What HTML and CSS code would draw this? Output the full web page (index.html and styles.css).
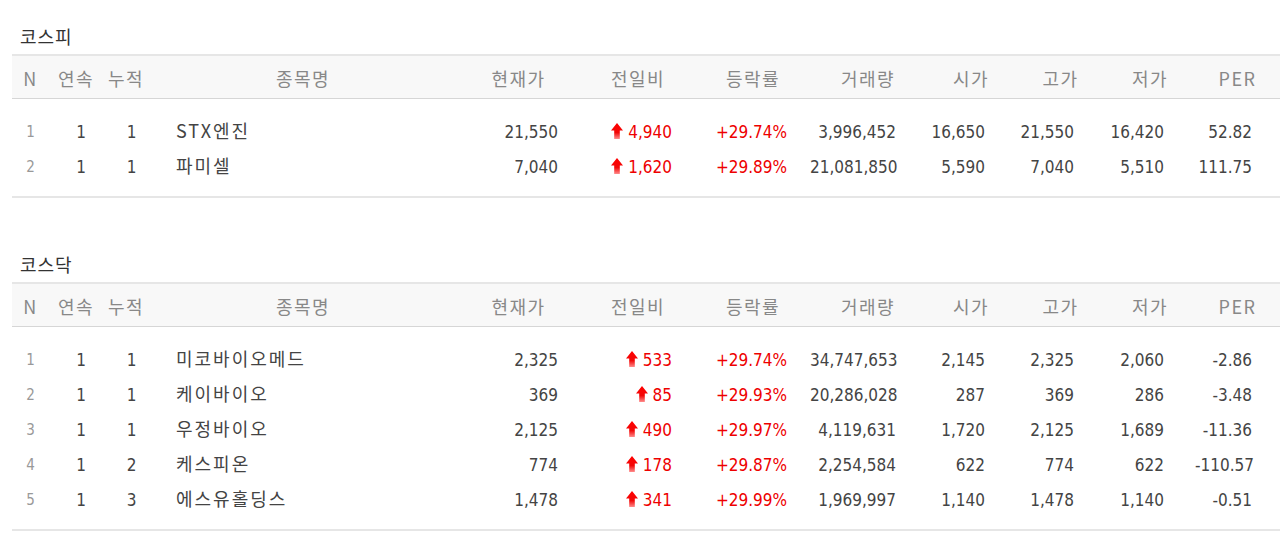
FILE: index.html
```html
<!DOCTYPE html>
<html lang="ko">
<head>
<meta charset="utf-8">
<title>상한가</title>
<link rel="stylesheet" href="styles.css">
</head>
<body>
<svg width="0" height="0" class="defs" aria-hidden="true">
  <defs>
    <linearGradient id="upg" x1="0" y1="0" x2="0" y2="1">
      <stop offset="0" stop-color="#ff0000"/>
      <stop offset="0.6" stop-color="#f20808"/>
      <stop offset="1" stop-color="#ff8c8c"/>
    </linearGradient>
  </defs>
</svg>

<section class="market">
  <h2 class="title">코스피</h2>
  <div class="grid head">
    <div class="h">N</div><div class="h">연속</div><div class="h">누적</div><div class="h">종목명</div>
    <div class="h">현재가</div><div class="h">전일비</div><div class="h">등락률</div><div class="h">거래량</div>
    <div class="h">시가</div><div class="h">고가</div><div class="h">저가</div><div class="h">PER</div>
  </div>
  <div class="body">
    <div class="grid row">
      <div class="no">1</div><div class="cnt c1">1</div><div class="cnt c2">1</div><div class="name">STX엔진</div>
      <div class="num p-price">21,550</div>
      <div class="num p-diff up"><svg class="arr" viewBox="0 0 12 16"><path d="M6 0 L12 7.5 L8.8 7.5 L8.8 16 L3.2 16 L3.2 7.5 L0 7.5 Z" fill="url(#upg)"/></svg>4,940</div>
      <div class="num p-rate up">+29.74%</div>
      <div class="num p-vol">3,996,452</div>
      <div class="num p-o">16,650</div><div class="num p-o">21,550</div><div class="num p-o">16,420</div>
      <div class="num p-per">52.82</div>
    </div>
    <div class="grid row">
      <div class="no">2</div><div class="cnt c1">1</div><div class="cnt c2">1</div><div class="name">파미셀</div>
      <div class="num p-price">7,040</div>
      <div class="num p-diff up"><svg class="arr" viewBox="0 0 12 16"><path d="M6 0 L12 7.5 L8.8 7.5 L8.8 16 L3.2 16 L3.2 7.5 L0 7.5 Z" fill="url(#upg)"/></svg>1,620</div>
      <div class="num p-rate up">+29.89%</div>
      <div class="num p-vol">21,081,850</div>
      <div class="num p-o">5,590</div><div class="num p-o">7,040</div><div class="num p-o">5,510</div>
      <div class="num p-per">111.75</div>
    </div>
  </div>
</section>

<section class="market second">
  <h2 class="title">코스닥</h2>
  <div class="grid head">
    <div class="h">N</div><div class="h">연속</div><div class="h">누적</div><div class="h">종목명</div>
    <div class="h">현재가</div><div class="h">전일비</div><div class="h">등락률</div><div class="h">거래량</div>
    <div class="h">시가</div><div class="h">고가</div><div class="h">저가</div><div class="h">PER</div>
  </div>
  <div class="body">
    <div class="grid row">
      <div class="no">1</div><div class="cnt c1">1</div><div class="cnt c2">1</div><div class="name">미코바이오메드</div>
      <div class="num p-price">2,325</div>
      <div class="num p-diff up"><svg class="arr" viewBox="0 0 12 16"><path d="M6 0 L12 7.5 L8.8 7.5 L8.8 16 L3.2 16 L3.2 7.5 L0 7.5 Z" fill="url(#upg)"/></svg>533</div>
      <div class="num p-rate up">+29.74%</div>
      <div class="num p-vol">34,747,653</div>
      <div class="num p-o">2,145</div><div class="num p-o">2,325</div><div class="num p-o">2,060</div>
      <div class="num p-per">-2.86</div>
    </div>
    <div class="grid row">
      <div class="no">2</div><div class="cnt c1">1</div><div class="cnt c2">1</div><div class="name">케이바이오</div>
      <div class="num p-price">369</div>
      <div class="num p-diff up"><svg class="arr" viewBox="0 0 12 16"><path d="M6 0 L12 7.5 L8.8 7.5 L8.8 16 L3.2 16 L3.2 7.5 L0 7.5 Z" fill="url(#upg)"/></svg>85</div>
      <div class="num p-rate up">+29.93%</div>
      <div class="num p-vol">20,286,028</div>
      <div class="num p-o">287</div><div class="num p-o">369</div><div class="num p-o">286</div>
      <div class="num p-per">-3.48</div>
    </div>
    <div class="grid row">
      <div class="no">3</div><div class="cnt c1">1</div><div class="cnt c2">1</div><div class="name">우정바이오</div>
      <div class="num p-price">2,125</div>
      <div class="num p-diff up"><svg class="arr" viewBox="0 0 12 16"><path d="M6 0 L12 7.5 L8.8 7.5 L8.8 16 L3.2 16 L3.2 7.5 L0 7.5 Z" fill="url(#upg)"/></svg>490</div>
      <div class="num p-rate up">+29.97%</div>
      <div class="num p-vol">4,119,631</div>
      <div class="num p-o">1,720</div><div class="num p-o">2,125</div><div class="num p-o">1,689</div>
      <div class="num p-per">-11.36</div>
    </div>
    <div class="grid row">
      <div class="no">4</div><div class="cnt c1">1</div><div class="cnt c2">2</div><div class="name">케스피온</div>
      <div class="num p-price">774</div>
      <div class="num p-diff up"><svg class="arr" viewBox="0 0 12 16"><path d="M6 0 L12 7.5 L8.8 7.5 L8.8 16 L3.2 16 L3.2 7.5 L0 7.5 Z" fill="url(#upg)"/></svg>178</div>
      <div class="num p-rate up">+29.87%</div>
      <div class="num p-vol">2,254,584</div>
      <div class="num p-o">622</div><div class="num p-o">774</div><div class="num p-o">622</div>
      <div class="num p-per">-110.57</div>
    </div>
    <div class="grid row">
      <div class="no">5</div><div class="cnt c1">1</div><div class="cnt c2">3</div><div class="name">에스유홀딩스</div>
      <div class="num p-price">1,478</div>
      <div class="num p-diff up"><svg class="arr" viewBox="0 0 12 16"><path d="M6 0 L12 7.5 L8.8 7.5 L8.8 16 L3.2 16 L3.2 7.5 L0 7.5 Z" fill="url(#upg)"/></svg>341</div>
      <div class="num p-rate up">+29.99%</div>
      <div class="num p-vol">1,969,997</div>
      <div class="num p-o">1,140</div><div class="num p-o">1,478</div><div class="num p-o">1,140</div>
      <div class="num p-per">-0.51</div>
    </div>
  </div>
</section>
</body>
</html>
```

FILE: styles.css
```css
html, body {
  margin: 0;
  padding: 0;
  background: #ffffff;
}

body {
  padding: 25px 0 0 12px;
  font-family: "DejaVu Sans Condensed", "DejaVu Sans", "Noto Sans CJK KR", sans-serif;
  font-stretch: condensed;
  font-size: 17px;
  color: #444444;
  overflow: hidden;
}

.defs {
  position: absolute;
  width: 0;
  height: 0;
}

.market.second {
  margin-top: 55px;
}

.title {
  margin: 0 0 7px 0;
  padding-left: 8px;
  font-family: "Noto Sans CJK KR", sans-serif;
  font-weight: 400;
  font-size: 18px;
  line-height: 22px;
  letter-spacing: 1px;
  color: #333333;
}

.grid {
  display: grid;
  grid-template-columns: 37px 54px 46px 308px 123px 116px 114px 116px 90px 89px 90px 1fr;
  align-items: center;
}

.head {
  height: 42px;
  background: #f8f8f8;
  border-top: 2px solid #e6e6e6;
  border-bottom: 1px solid #d6d6d6;
}

.h {
  text-align: center;
  padding-top: 2px;
  font-family: "Noto Sans CJK KR", sans-serif;
  font-size: 18px;
  letter-spacing: 1.5px;
  color: #888888;
  white-space: nowrap;
}

.body {
  padding: 15px 0 12px 0;
  border-bottom: 2px solid #e6e6e6;
}

.row {
  height: 35px;
}

.no {
  text-align: center;
  font-size: 15px;
  color: #999999;
}

.cnt {
  text-align: center;
  color: #444444;
}

.c1 {
  padding-left: 10px;
}

.c2 {
  padding-left: 11px;
}

.name {
  padding-left: 27px;
  padding-bottom: 3px;
  font-family: "Noto Sans CJK KR", sans-serif;
  font-size: 18px;
  letter-spacing: 2px;
  color: #444444;
  white-space: nowrap;
}

.num {
  text-align: right;
  white-space: nowrap;
  color: #444444;
}

.up {
  color: #ee0000;
}

.p-price { padding-right: 22px; }
.p-diff { padding-right: 24px; }
.p-rate { padding-right: 23px; }
.p-vol { padding-right: 30px; }
.p-o { padding-right: 31px; }
.p-per { padding-right: 28px; }

.arr {
  width: 12px;
  height: 16px;
  margin-right: 5px;
  vertical-align: -1px;
}
```
